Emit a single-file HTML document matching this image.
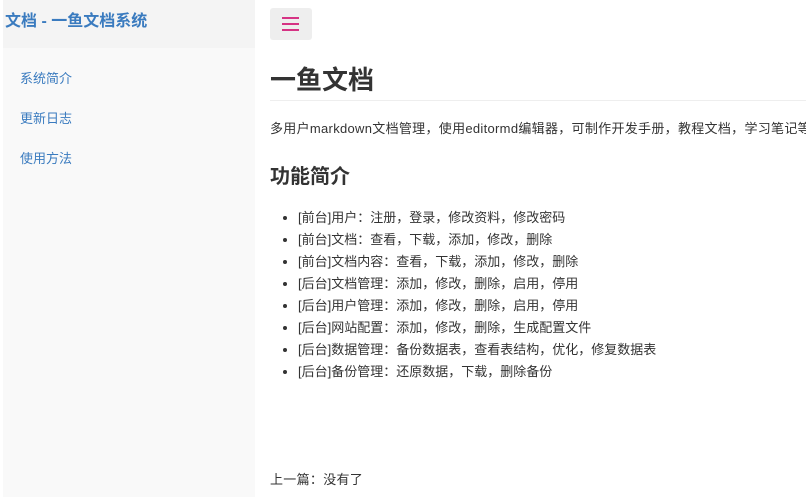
<!DOCTYPE html>
<html><head><meta charset="utf-8"><style>
*{margin:0;padding:0;box-sizing:border-box}
body{width:806px;height:497px;overflow:hidden;background:#fff;font-family:"Liberation Sans","Noto Sans CJK SC",sans-serif;color:#333;position:relative}
.side{position:absolute;left:3px;top:0;width:252px;height:497px;background:#f9f9f9}
.sh{height:48px;background:#f4f4f4;color:#3a7bbf;font-weight:bold;font-size:16px;line-height:44px;padding-left:2px;white-space:nowrap}
.side a{display:block;position:absolute;left:17px;color:#3a7bbf;font-size:13px;text-decoration:none}
.btn{position:absolute;left:270px;top:8px;width:42px;height:32px;background:#eee;border-radius:3px}
.btn i{position:absolute;left:12px;width:17px;height:2px;background:#d63384}
.main{position:absolute;left:270px;top:0;white-space:nowrap}
h1{position:absolute;top:63px;font-size:26px;line-height:34px}
.hr{position:absolute;left:270px;top:100px;width:536px;height:1px;background:#eee}
p{font-size:13px;letter-spacing:0.3px}
h2{position:absolute;top:163px;font-size:20px;line-height:28px}
ul{position:absolute;top:207px;left:28px;font-size:13px;line-height:22px}
</style></head><body>
<div class="side"><div class="sh">文档 - 一鱼文档系统</div>
<a style="top:68px">系统简介</a><a style="top:108px">更新日志</a><a style="top:148px">使用方法</a></div>
<div class="btn"><i style="top:9px"></i><i style="top:15px"></i><i style="top:21px"></i></div>
<div class="hr"></div>
<div class="main">
<h1>一鱼文档</h1>
<p style="position:absolute;top:118px">多用户markdown文档管理，使用editormd编辑器，可制作开发手册，教程文档，学习笔记等</p>
<h2>功能简介</h2>
<ul>
<li>[前台]用户：注册，登录，修改资料，修改密码</li>
<li>[前台]文档：查看，下载，添加，修改，删除</li>
<li>[前台]文档内容：查看，下载，添加，修改，删除</li>
<li>[后台]文档管理：添加，修改，删除，启用，停用</li>
<li>[后台]用户管理：添加，修改，删除，启用，停用</li>
<li>[后台]网站配置：添加，修改，删除，生成配置文件</li>
<li>[后台]数据管理：备份数据表，查看表结构，优化，修复数据表</li>
<li>[后台]备份管理：还原数据，下载，删除备份</li>
</ul>
<p style="position:absolute;top:469px">上一篇：没有了</p>
</div>
</body></html>
